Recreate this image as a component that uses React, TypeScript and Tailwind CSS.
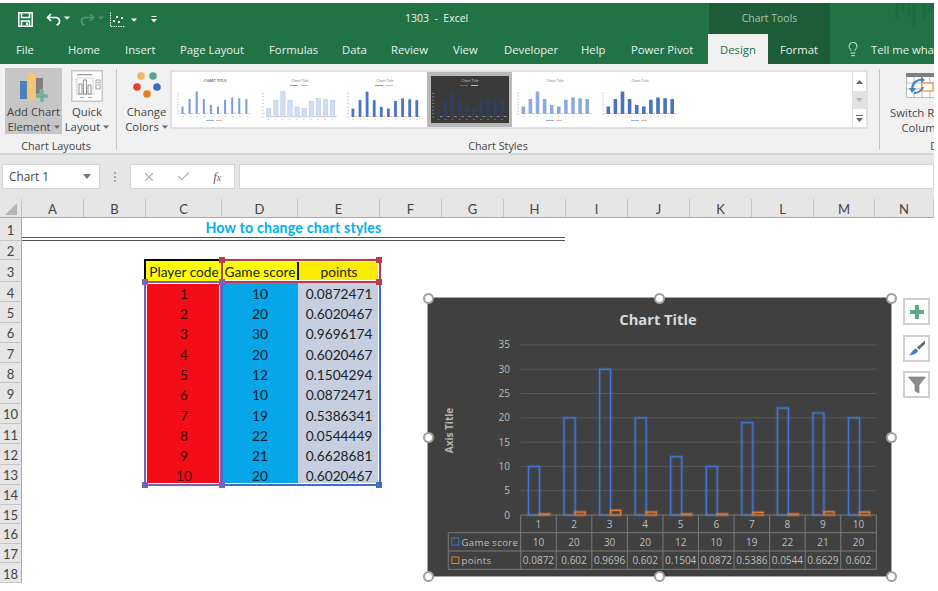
import React from "react";
import { X, Check, Lightbulb } from "lucide-react";

const UI = "font-['Open_Sans',sans-serif]";
const CELL = "font-['Lato',sans-serif]";

const tabs = [
  { t: "File", c: "w-[68px] pl-[16px]" },
  { t: "Home", c: "w-[57px]" },
  { t: "Insert", c: "w-[55px]" },
  { t: "Page Layout", c: "w-[89px]" },
  { t: "Formulas", c: "w-[73px]" },
  { t: "Data", c: "w-[49px]" },
  { t: "Review", c: "w-[62px]" },
  { t: "View", c: "w-[51px]" },
  { t: "Developer", c: "w-[77px]" },
  { t: "Help", c: "w-[50px]" },
  { t: "Power Pivot", c: "w-[77px]" },
];

const columns = [
  { t: "A", c: "w-[62px]" },
  { t: "B", c: "w-[62px]" },
  { t: "C", c: "w-[76px]" },
  { t: "D", c: "w-[76px]" },
  { t: "E", c: "w-[82px]" },
  { t: "F", c: "w-[62px]" },
  { t: "G", c: "w-[62px]" },
  { t: "H", c: "w-[62px]" },
  { t: "I", c: "w-[62px]" },
  { t: "J", c: "w-[62px]" },
  { t: "K", c: "w-[62px]" },
  { t: "L", c: "w-[62px]" },
  { t: "M", c: "w-[61px]" },
  { t: "N", c: "w-[59px]" },
];

const data = [
  [1, 10, "0.0872471"],
  [2, 20, "0.6020467"],
  [3, 30, "0.9696174"],
  [4, 20, "0.6020467"],
  [5, 12, "0.1504294"],
  [6, 10, "0.0872471"],
  [7, 19, "0.5386341"],
  [8, 22, "0.0544449"],
  [9, 21, "0.6628681"],
  [10, 20, "0.6020467"],
];

const scores = [10, 20, 30, 20, 12, 10, 19, 22, 21, 20];
const points = [0.0872, 0.602, 0.9696, 0.602, 0.1504, 0.0872, 0.5386, 0.0544, 0.6629, 0.602];
const pointLabels = ["0.0872", "0.602", "0.9696", "0.602", "0.1504", "0.0872", "0.5386", "0.0544", "0.6629", "0.602"];

function RowHead({ n, h }: { n: number; h: string }) {
  return (
    <div className={`w-[22px] shrink-0 ${h} pt-[3px] bg-[#e6e6e6] border-r border-b border-r-[#ababab] border-b-[#c4c4c4] flex items-center justify-center text-[13px] text-[#444] ${CELL}`}>
      {n}
    </div>
  );
}

function Caret({ c = "#666" }: { c?: string }) {
  return (
    <svg width="6" height="4" viewBox="0 0 6 4" className="inline-block ml-[3px] mb-[2px]">
      <path d="M0 0.5h6L3 3.8z" fill={c} />
    </svg>
  );
}

function SaveIcon() {
  return (
    <svg width="15" height="15" viewBox="0 0 15 15" fill="none" stroke="#fff" strokeWidth="1.5">
      <path d="M0.8 0.8H14.2V14.2H0.8z" />
      <path d="M3.5 0.8V5.5H11.5V0.8" />
      <path d="M3.5 14.2V9H11.5V14.2" />
      <path d="M9 10.5v2.5" strokeWidth="2" />
    </svg>
  );
}

function Undo({ c, flip }: { c: string; flip?: boolean }) {
  return (
    <svg width="15" height="13" viewBox="0 0 15 13" fill="none" stroke={c} strokeWidth="1.7" className={flip ? "-scale-x-100" : ""}>
      <path d="M5 1L1.5 4.5L5 8" />
      <path d="M1.5 4.5H9.5C12.5 4.5 13.5 6.5 13.5 8.2C13.5 10 12.3 11.5 10.5 12" />
    </svg>
  );
}

function ScatterIcon() {
  return (
    <svg width="15" height="15" viewBox="0 0 15 15" fill="#fff">
      <path d="M0.5 0.5V14.5H15" stroke="#fff" strokeDasharray="1.4 1" fill="none" />
      <rect x="3" y="8" width="2" height="2" />
      <rect x="6" y="4" width="2" height="2" />
      <rect x="8" y="9" width="2" height="2" />
      <rect x="11" y="5" width="2" height="2" />
    </svg>
  );
}

function AddChartIcon() {
  return (
    <svg width="28" height="30" viewBox="0 0 28 30">
      <rect x="0" y="8" width="7" height="18" fill="#4a80bd" />
      <rect x="8" y="0" width="7" height="26" fill="#f2c777" />
      <rect x="16" y="5" width="7" height="16" fill="#7f7f7f" />
      <path d="M20 17h4v4h4v4h-4v4h-4v-4h-4v-4h4z" fill="#6fb09a" stroke="#c6c6c6" strokeWidth="0.5" />
    </svg>
  );
}

function QuickLayoutIcon() {
  return (
    <svg width="32" height="32" viewBox="0 0 32 32">
      <rect x="0.75" y="0.75" width="30.5" height="30.5" fill="#fff" stroke="#c8c8c8" strokeWidth="1.5" />
      <rect x="6" y="4" width="15" height="1.3" fill="#9a9a9a" />
      <path d="M5 9v15H24" stroke="#aaa" strokeWidth="0.8" fill="none" strokeDasharray="1 1.5" />
      <rect x="6" y="8" width="16" height="16" fill="none" stroke="#bbb" strokeWidth="0.6" />
      <rect x="8" y="14" width="3" height="10" fill="#fff" stroke="#777" strokeWidth="0.8" />
      <rect x="12.5" y="10" width="3" height="14" fill="#fff" stroke="#777" strokeWidth="0.8" />
      <rect x="17" y="15" width="3" height="9" fill="#fff" stroke="#777" strokeWidth="0.8" />
      <rect x="25" y="10" width="4" height="9" fill="#fff" stroke="#888" strokeWidth="0.8" />
      <path d="M26 12.5h2M26 15h2" stroke="#888" strokeWidth="0.7" />
      <rect x="9" y="27" width="4" height="1" fill="#aaa" />
      <rect x="17" y="27" width="4" height="1" fill="#aaa" />
    </svg>
  );
}

function ColorsIcon() {
  return (
    <svg width="30" height="26" viewBox="0 0 30 26">
      <circle cx="9" cy="4" r="3.8" fill="#eeb562" />
      <circle cx="21" cy="4" r="3.8" fill="#5aa58b" />
      <circle cx="5" cy="15" r="3.8" fill="#d9452f" />
      <circle cx="25" cy="15" r="3.8" fill="#3b6fb6" />
      <circle cx="15" cy="22" r="3.8" fill="#e87d1e" />
    </svg>
  );
}

function SwitchIcon() {
  return (
    <svg width="32" height="25" viewBox="0 0 32 25">
      <rect x="0" y="0" width="32" height="25" fill="#fff" />
      <rect x="0" y="0" width="32" height="4" fill="#7f7f7f" />
      <path d="M0.5 4V24.5H32M8 4V25M16 4V25M24 4V25M0 10H32M0 16H32" stroke="#aaa" strokeWidth="0.8" fill="none" />
      <rect x="16" y="10" width="11" height="8" fill="#fff" stroke="#ed8a3a" strokeWidth="1.2" />
      <path d="M6 15C7 9 12 6 17 7" stroke="#3f84c5" strokeWidth="2" fill="none" />
      <path d="M15 3.5L19 7L15 10z" fill="#3f84c5" />
      <path d="M17 14C15 19 11 20 8 20" stroke="#3f84c5" strokeWidth="2" fill="none" />
      <path d="M3 15H10L6 20z" fill="#3f84c5" />
    </svg>
  );
}

type Mini = {
  title: string;
  bold?: boolean;
  dark?: boolean;
  bar: string;
  pale?: string;
  bw: number;
  legendTop?: boolean;
  axisY: number;
};

function MiniChart({ title, bold, dark, bar, pale, bw, legendTop, axisY }: Mini) {
  const textC = dark ? "#cfcfcf" : "#777";
  const tick = dark ? "#8a8a8a" : "#c4c4c4";
  const unit = (axisY - 14) / 32;
  return (
    <svg width="78" height="47" viewBox="0 0 78 47" className="block">
      <rect width="78" height="47" fill={dark ? "#3a3a3a" : "#fff"} />
      <text x="39" y="6" textAnchor="middle" fontSize="3.6" fontWeight={bold ? 700 : 400} fill={textC} fontFamily="Open Sans, sans-serif">
        {title}
      </text>
      {legendTop && (
        <g>
          <rect x="29" y="9" width="8" height="1" fill={dark ? "#4a6aa0" : "#7f9fdc"} />
          <rect x="40" y="9" width="7" height="1" fill="#efb08a" />
        </g>
      )}
      {[0, 1, 2, 3, 4, 5, 6, 7].map((i) => (
        <rect key={i} x="1" y={axisY - i * 4 * unit - 0.4} width="2.2" height="0.8" fill={tick} />
      ))}
      {scores.map((v, i) => {
        const x = 5.5 + i * 7.1;
        const h = v * unit;
        return (
          <g key={i}>
            <rect x={x} y={axisY - h} width={bw} height={h} fill={pale ?? bar} stroke={pale ? bar : "none"} strokeWidth="0.4" />
            <rect x={x + bw} y={axisY - 0.7} width="2.4" height="0.7" fill="#f0a070" />
            <rect x={x + 1} y={axisY + 2} width="1.6" height="0.8" fill={tick} />
          </g>
        );
      })}
      {!legendTop && (
        <g>
          <rect x="30" y="44" width="8" height="0.9" fill="#8eaadb" />
          <rect x="40" y="44" width="6" height="0.9" fill="#efb08a" />
        </g>
      )}
    </svg>
  );
}

const thumbs: Mini[] = [
  { title: "CHART TITLE", bold: true, bar: "#7a9cd8", bw: 2, axisY: 38 },
  { title: "Chart Title", bar: "#a9c0e8", pale: "#d0ddf3", bw: 4.4, legendTop: true, axisY: 41 },
  { title: "Chart Title", bar: "#4a74c4", bw: 2.8, legendTop: true, axisY: 41 },
  { title: "Chart Title", dark: true, bar: "#2f405c", bw: 3.6, legendTop: true, axisY: 41 },
  { title: "Chart Title", bar: "#8eaadb", bw: 3.6, axisY: 38 },
  { title: "Chart Title", bar: "#4a72c0", bw: 3.6, axisY: 38 },
];

function ChartSvg() {
  const unit = 4.86;
  const base = 515;
  const x0 = 520.7;
  const cw = 35.56;
  const txt = "#bfbfbf";
  const font = "Open Sans, sans-serif";
  return (
    <svg width="463" height="278" viewBox="428 298 463 278" className="block">
      <rect x="428" y="298" width="463" height="278" fill="#404040" />
      <text x="658" y="325" textAnchor="middle" fontSize="14.7" fontWeight="700" fill="#d9d9d9" fontFamily={font}>
        Chart Title
      </text>
      <text transform="translate(453 430.5) rotate(-90)" textAnchor="middle" fontSize="10" fontWeight="700" fill="#b5b5b5" fontFamily={font}>
        Axis Title
      </text>
      {[5, 10, 15, 20, 25, 30, 35].map((v) => (
        <line key={v} x1={x0} x2="876.3" y1={base - v * unit} y2={base - v * unit} stroke="#585858" />
      ))}
      {[0, 5, 10, 15, 20, 25, 30, 35].map((v) => (
        <text key={v} x="510" y={base - v * unit + 3.5} textAnchor="end" fontSize="10" fill={txt} fontFamily={font}>
          {v}
        </text>
      ))}
      {scores.map((v, i) => {
        const c = x0 + cw * i + cw / 2;
        const h = v * unit;
        const ph = Math.max(points[i] * unit, 1);
        return (
          <g key={i} fill="none">
            <rect x={c - 10} y={base - h} width="11" height={h} stroke="#3f74cc" strokeWidth="3.5" opacity="0.28" />
            <rect x={c - 10} y={base - h} width="11" height={h} stroke="#3f78d6" strokeWidth="1.2" />
            <rect x={c + 1} y={base - ph} width="10" height={ph} stroke="#d9732b" strokeWidth="3.5" opacity="0.3" />
            <rect x={c + 1} y={base - ph} width="10" height={ph} stroke="#ed7d31" strokeWidth="1.2" />
          </g>
        );
      })}
      <g stroke="#7a7a7a" strokeWidth="1" fill="none">
        <path d={`M${x0} 515H876.3M448.3 532.7H876.3M448.3 551H876.3M448.3 569.3H876.3M448.3 532.7V569.3`} />
        {Array.from({ length: 11 }).map((_, i) => (
          <line key={i} x1={x0 + cw * i} x2={x0 + cw * i} y1="515" y2="569.3" />
        ))}
      </g>
      {scores.map((v, i) => {
        const c = x0 + cw * i + cw / 2;
        return (
          <g key={i} textAnchor="middle" fontSize="10" fill={txt} fontFamily={font}>
            <text x={c} y="527.5">{i + 1}</text>
            <text x={c} y="545.5">{v}</text>
            <text x={c} y="564">{pointLabels[i]}</text>
          </g>
        );
      })}
      <rect x="451.8" y="538" width="7" height="7" fill="none" stroke="#3f74cc" />
      <rect x="451.8" y="557" width="7" height="6.5" fill="none" stroke="#ed7d31" />
      <text x="461.5" y="545.5" fontSize="9.6" letterSpacing="0.35" fill={txt} fontFamily={font}>Game score</text>
      <text x="461.5" y="564" fontSize="9.6" letterSpacing="0.35" fill={txt} fontFamily={font}>points</text>
    </svg>
  );
}

function Handle({ c }: { c: string }) {
  return <div className={`absolute w-[11px] h-[11px] rounded-full bg-white border-2 border-[#a0a0a0] ${c}`} />;
}

function Square({ c }: { c: string }) {
  return <div className={`absolute w-[6px] h-[6px] ${c}`} />;
}

export default function App() {
  return (
    <div className={`w-[938px] h-[591px] bg-white overflow-hidden pt-[3px] ${UI}`}>
      <div className="w-[934px] overflow-hidden">
        {/* title bar */}
        <div className="relative h-[61px] bg-[#217346] text-white">
          <div className="flex h-[32px]">
            <div className="flex items-center w-[709px] shrink-0">
              <div className="ml-[18px]"><SaveIcon /></div>
              <div className="ml-[13px]"><Undo c="#fff" /></div>
              <Caret c="#fff" />
              <div className="ml-[10px]"><Undo c="#4d9a6e" flip /></div>
              <Caret c="#4d9a6e" />
              <div className="ml-[6px]"><ScatterIcon /></div>
              <div className="ml-[3px]"><Caret c="#fff" /></div>
              <svg width="8" height="7" viewBox="0 0 8 7" className="ml-[13px]">
                <path d="M1.5 0.5H6.5" stroke="#fff" strokeWidth="1" />
                <path d="M1 3H7L4 6.5z" fill="#fff" />
              </svg>
              <div className="ml-[247px] text-[10.5px] text-[#f0f5f2] whitespace-pre">1303  -  Excel</div>
            </div>
            <div className="w-[121px] shrink-0 bg-[#1e5c38] flex items-center justify-center text-[10.5px] text-[#a5c7b3]">Chart Tools</div>
            <svg width="80" height="32" viewBox="0 0 80 32" className="ml-[24px]">
              <path d="M43 0V16M49 0V10M55 0V14M60 0V24M70 0V17M80 0L72 12" stroke="#1d6a3f" strokeWidth="3" fill="none" opacity="0.7" />
            </svg>
          </div>
          <div className="flex h-[29px] text-[11.3px] text-[#e8f1ec]">
            {tabs.map((tab) => (
              <div key={tab.t} className={`${tab.c} shrink-0 pt-[7px] whitespace-nowrap`}>{tab.t}</div>
            ))}
            <div className="w-[60px] h-[30px] -mt-[1px] shrink-0 bg-[#f1f1f1] text-[#217346] text-center pt-[8px]">Design</div>
            <div className="w-[62px] shrink-0 bg-[#1e5c38] text-center pt-[7px]">Format</div>
            <div className="ml-[15px] pt-[6px]"><Lightbulb size={16} strokeWidth={1.4} /></div>
            <div className="ml-[10px] pt-[7px] whitespace-nowrap">Tell me what</div>
          </div>
        </div>

        {/* ribbon */}
        <div className="flex h-[89px] bg-[#f1f1f1] text-[11.3px] leading-[15px] text-[#444]">
          <div className="w-[116px] shrink-0 flex flex-col">
            <div className="flex pl-[5px] pt-[4px]">
              <div className="w-[57px] h-[66px] bg-[#c6c6c6] flex flex-col items-center">
                <div className="mt-[5px] h-[32px]"><AddChartIcon /></div>
                <div className="whitespace-nowrap">Add Chart</div>
                <div className="whitespace-nowrap">Element<Caret /></div>
              </div>
              <div className="w-[46px] ml-[2px] flex flex-col items-center">
                <div className="mt-[2px] h-[34px]"><QuickLayoutIcon /></div>
                <div>Quick</div>
                <div className="whitespace-nowrap">Layout<Caret /></div>
              </div>
            </div>
            <div className="mt-auto h-[15px] text-center text-[10.8px] pr-[4px]">Chart Layouts</div>
          </div>
          <div className="w-px h-[81px] mt-[5px] bg-[#c6c6c6] shrink-0" />
          <div className="w-[762px] shrink-0 flex flex-col">
            <div className="flex pt-[6px]">
              <div className="w-[53px] pl-[6px] flex flex-col items-center shrink-0">
                <div className="h-[34px] pt-[2px]"><ColorsIcon /></div>
                <div>Change</div>
                <div className="whitespace-nowrap">Colors<Caret /></div>
              </div>
              <div className="flex w-[698px] h-[59px] border-2 border-[#e1e1e1] bg-white">
                <div className="flex w-[682px]">
                  {thumbs.map((t, i) => (
                    <div key={i} className={`w-[85px] h-[55px] shrink-0 flex items-center justify-center ${t.dark ? "bg-[#b9b9b9]" : ""}`}>
                      <MiniChart {...t} />
                    </div>
                  ))}
                </div>
                <div className="w-[14px] flex flex-col border-l border-[#e1e1e1]">
                  <div className="h-[19px] flex items-center justify-center">
                    <svg width="7" height="4" viewBox="0 0 7 4"><path d="M0 4L3.5 0L7 4z" fill="#666" /></svg>
                  </div>
                  <div className="h-[18px] bg-[#e1e1e1] flex items-center justify-center">
                    <svg width="7" height="4" viewBox="0 0 7 4"><path d="M0 0L3.5 4L7 0z" fill="#b5b5b5" /></svg>
                  </div>
                  <div className="h-[18px] flex items-center justify-center">
                    <svg width="7" height="7" viewBox="0 0 7 7"><path d="M0 0.5H7" stroke="#666" /><path d="M0 3L3.5 7L7 3z" fill="#666" /></svg>
                  </div>
                </div>
              </div>
            </div>
            <div className="mt-auto h-[15px] text-center text-[10.8px]">Chart Styles</div>
          </div>
          <div className="w-px h-[81px] mt-[5px] bg-[#c6c6c6] shrink-0" />
          <div className="w-[124px] shrink-0 flex flex-col">
            <div className="w-[84px] flex flex-col items-center pt-[9px]">
              <div className="h-[32px]"><SwitchIcon /></div>
              <div className="whitespace-nowrap">Switch Row/</div>
              <div>Column</div>
            </div>
            <div className="mt-auto h-[15px] text-center text-[10.8px]">Data</div>
          </div>
        </div>
        <div className="h-[2px] bg-[#d6d6d6]" />

        {/* formula bar */}
        <div className="h-[44px] bg-[#e6e6e6] flex items-start pt-[9px] text-[11.8px] text-[#444]">
          <div className="ml-[2px] w-[98px] h-[25px] bg-white border border-[#d4d4d4] flex items-center pl-[6px] justify-between pr-[8px] shrink-0">
            Chart 1
            <svg width="8" height="5" viewBox="0 0 8 5"><path d="M0 0H8L4 5z" fill="#777" /></svg>
          </div>
          <div className="w-[30px] h-[25px] shrink-0 flex items-center justify-center">
            <div className="w-[2px] h-[10px] border-l-2 border-dotted border-[#aaa]" />
          </div>
          <div className="w-[105px] h-[25px] shrink-0 bg-white border border-[#d4d4d4] flex items-center text-[#b5b5b5]">
            <div className="w-[36px] flex justify-center"><X size={14} strokeWidth={2} /></div>
            <div className="w-[34px] flex justify-center"><Check size={15} strokeWidth={2.2} /></div>
            <div className="w-[34px] text-center text-[#666] text-[13px] italic font-['Liberation_Serif',serif]">f<span className="text-[10px]">x</span></div>
          </div>
          <div className="ml-[4px] flex-1 h-[25px] bg-white border border-[#d4d4d4]" />
        </div>

        {/* column headers */}
        <div className={`flex h-[19px] bg-[#e6e6e6] border-b border-[#ababab] text-[13px] leading-none text-[#444] ${CELL}`}>
          <div className="w-[22px] shrink-0 flex items-end justify-end pr-[4px] pb-[2px] border-r border-[#c4c4c4]">
            <svg width="12" height="12" viewBox="0 0 12 12"><path d="M12 0V12H0z" fill="#b5b5b5" /></svg>
          </div>
          {columns.map((col) => (
            <div key={col.t} className={`${col.c} shrink-0 pt-[2px] flex items-center justify-center border-r border-[#c4c4c4]`}>{col.t}</div>
          ))}
        </div>

        {/* sheet */}
        <div className={`relative h-[373px] text-[13.7px] leading-none text-[#222] ${CELL}`}>
          <div className="flex">
            <RowHead n={1} h="h-[23px]" />
            <div className="w-[543px] h-[23px] pt-[2px] border-b-[4px] border-double border-[#555] flex items-center justify-center text-[14.2px] font-bold tracking-[0.2px] text-[#00b0f0]">
              How to change chart styles
            </div>
          </div>
          <div className="flex">
            <RowHead n={2} h="h-[19px]" />
          </div>
          <div className="flex">
            <RowHead n={3} h="h-[22px]" />
            <div className="w-[124px] shrink-0" />
            <div className="w-[76px] shrink-0 pt-[2px] bg-[#ffff00] flex items-center justify-center whitespace-nowrap">Player code</div>
            <div className="w-[76px] shrink-0 pt-[2px] bg-[#ffff00] flex items-center justify-center whitespace-nowrap">Game score</div>
            <div className="w-[82px] shrink-0 pt-[2px] bg-[#fbec00] flex items-center justify-center">points</div>
          </div>
          {data.map((row, i) => (
            <div key={i} className="flex">
              <RowHead n={i + 4} h="h-[20.3px]" />
              <div className="w-[124px] shrink-0" />
              <div className="w-[76px] shrink-0 pt-[3px] bg-[#f20d17] text-[#3a0608] flex items-center justify-center">{row[0]}</div>
              <div className="w-[76px] shrink-0 pt-[3px] bg-[#06a6e8] text-[#06222f] flex items-center justify-center">{row[1]}</div>
              <div className="w-[82px] shrink-0 pt-[3px] bg-[#c5cfe0] flex items-center justify-center">{row[2]}</div>
            </div>
          ))}
          {[14, 15, 16, 17, 18].map((n) => (
            <div key={n} className="flex">
              <RowHead n={n} h="h-[19.6px]" />
            </div>
          ))}

          {/* range highlights */}
          <div className="absolute left-[221px] top-[41px] w-[160px] h-[24px] border-2 border-[#c0394b] shadow-[inset_0_0_0_1px_white]" />
          <div className="absolute left-[144px] top-[63px] w-[78px] h-[205px] border-2 border-[#7e5fb5] shadow-[inset_0_0_0_1px_white]" />
          <div className="absolute left-[221px] top-[64px] w-[160px] h-[204px] border-2 border-t-0 border-[#3f6fc4] shadow-[inset_0_-1px_0_0_white,inset_-1px_0_0_0_white]" />
          <div className="absolute left-[144px] top-[41px] w-[78px] h-[2px] bg-black" />
          <div className="absolute left-[144px] top-[41px] w-[2px] h-[22px] bg-black" />
          <div className="absolute left-[297px] top-[44px] w-[2px] h-[18px] bg-[#111]" />
          <Square c="left-[219px] top-[39px] bg-[#c0394b]" />
          <Square c="left-[376px] top-[39px] bg-[#c0394b]" />
          <Square c="left-[376px] top-[61px] bg-[#c0394b]" />
          <Square c="left-[142px] top-[61px] bg-[#7e5fb5]" />
          <Square c="left-[219px] top-[61px] bg-[#7e5fb5]" />
          <Square c="left-[142px] top-[264px] bg-[#7e5fb5]" />
          <Square c="left-[219px] top-[264px] bg-[#7e5fb5]" />
          <Square c="left-[376px] top-[264px] bg-[#3f6fc4]" />

          {/* chart */}
          <div className="absolute left-[428px] top-[80px] w-[463px] h-[278px]">
            <div className="w-full h-full outline-[1.5px] outline-[#a6a6a6] rounded-[2px] overflow-hidden"><ChartSvg /></div>
            <Handle c="-left-[5px] -top-[5px]" />
            <Handle c="left-[226px] -top-[5px]" />
            <Handle c="left-[458px] -top-[5px]" />
            <Handle c="-left-[5px] top-[134px]" />
            <Handle c="left-[458px] top-[134px]" />
            <Handle c="-left-[5px] top-[273px]" />
            <Handle c="left-[226px] top-[273px]" />
            <Handle c="left-[458px] top-[273px]" />
            <div className="absolute left-[475px] top-0 w-[27px] h-[27px] bg-white border-2 border-[#d0d0d0] flex items-center justify-center">
              <svg width="14" height="14" viewBox="0 0 14 14"><path d="M5 0h4v5h5v4H9v5H5V9H0V5h5z" fill="#5fa88a" /></svg>
            </div>
            <div className="absolute left-[475px] top-[37px] w-[27px] h-[27px] bg-white border-2 border-[#d0d0d0] flex items-center justify-center">
              <svg width="18" height="17" viewBox="0 0 18 17">
                <path d="M17 0.5L9 7.5L11 9.5L17 4z" fill="#666" />
                <path d="M8 8.5L10 10.5C9.5 13 7 14.5 0.5 15.5C3.5 14 4 10 8 8.5z" fill="#3f7fc8" />
              </svg>
            </div>
            <div className="absolute left-[475px] top-[73px] w-[27px] h-[27px] bg-white border-2 border-[#d0d0d0] flex items-center justify-center">
              <svg width="18" height="18" viewBox="0 0 18 18">
                <path d="M0.5 1H17.5L11 9V17L7 15V9z" fill="#8c8c8c" stroke="#777" strokeWidth="0.6" />
              </svg>
            </div>
          </div>
        </div>
      </div>
    </div>
  );
}
